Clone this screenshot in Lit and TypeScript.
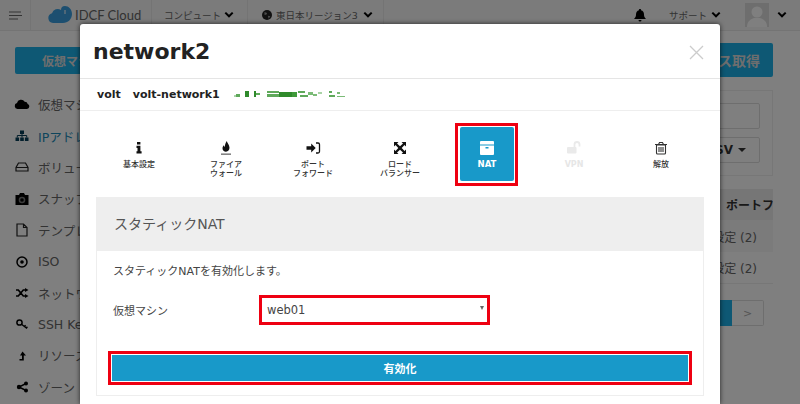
import { LitElement, html, css, svg } from "lit";
import { customElement } from "lit/decorators.js";

const chev = html`<svg class="chev" width="10" height="8" viewBox="0 0 10 8"><path d="M1.3 1.600 5 5.300l3.700-3.700" fill="none" stroke="#000" stroke-width="2"/></svg>`;

const sideIcons: Record<string, unknown> = {
  cloud: svg`<path d="M3.500 12a3 3 0 0 1-.5-5.900A4.200 4.200 0 0 1 10.700 4.700a3 3 0 0 1 3 2.300A2.600 2.600 0 0 1 13 12Z" fill="#000"/>`,
  sitemap: svg`<path d="M6 2.500h4v3.500H6zM1.500 9.500h3.600V13H1.500zM6.200 9.500h3.600V13H6.200zM10.900 9.500h3.600V13h-3.600z" fill="#063f58"/><path d="M3.300 9.500v-2h9.400v2M8 6v3.500" fill="none" stroke="#063f58"/>`,
  hdd: svg`<path d="M4.500 4h7l2.500 4.500V12H2V8.500ZM2 8.500h12" fill="none" stroke="#222" stroke-width="1.200"/>`,
  camera: svg`<path d="M1.500 4h3.500l1-2h4l1 2h3.500v10h-13z" fill="#000"/><circle cx="8" cy="9" r="3.300" fill="#777"/><circle cx="8" cy="9" r="1.800" fill="#000"/>`,
  file: svg`<path d="M3 2h6.500L13 5.500V14H3zM9.500 2v3.500H13" fill="none" stroke="#222" stroke-width="1.200"/>`,
  disc: svg`<circle cx="8" cy="8" r="5" fill="none" stroke="#000" stroke-width="1.500"/><circle cx="8" cy="8" r="1.800" fill="#000"/>`,
  random: svg`<path d="M2 5h2.300l5 6h1.700M2 11h2.300l5-6h1.700" fill="none" stroke="#000" stroke-width="1.700"/><path d="M11 3l3.500 2L11 7zM11 9l3.500 2-3.500 2z" fill="#000"/>`,
  key: svg`<circle cx="5.500" cy="6.500" r="2.600" fill="none" stroke="#000" stroke-width="1.500"/><path d="M7.500 8.300l5.500 4.200M10.300 10.500l1.300-1.300M12.300 12l1.100-1.200" fill="none" stroke="#000" stroke-width="1.400"/>`,
  up: svg`<path d="M8.500 3.500 12 7.500H9.800v5H5.500v-1.500h2.500V7.500H6Z" fill="#000"/>`,
  share: svg`<path d="M12 4.500 5 8l7 3.500" fill="none" stroke="#000" stroke-width="1.400"/><circle cx="12" cy="4.500" r="2" fill="#000"/><circle cx="5" cy="8" r="2.200" fill="#000"/><circle cx="12" cy="11.500" r="2" fill="#000"/>`,
};

const sideItems: [string, string, string][] = [
  ["cloud", "仮想マシン", ""],
  ["sitemap", "IPアドレス", "on"],
  ["hdd", "ボリューム", ""],
  ["camera", "スナップショット", ""],
  ["file", "テンプレート", ""],
  ["disc", "ISO", ""],
  ["random", "ネットワーク", ""],
  ["key", "SSH Key", ""],
  ["up", "リソース", ""],
  ["share", "ゾーン", ""],
];

const tabIcons: Record<string, unknown> = {
  info: svg`<path d="M6 2h3.400v2.600H6zM5.500 5.800h3.900v5.400h1.200V13.500H5.500v-2.300h1V8H5.500z" fill="#111"/>`,
  fire: svg`<path d="M8.800 0c.3 2.300 2.700 3.700 2.700 6.800 0 2.300-1.500 3.900-3.500 3.900S4.500 9.300 4.500 7.300c0-1.400.8-2.500 1.400-3.100 0 .9.300 1.500.8 1.800C6.900 4 7.400 2 8.800 0Z" fill="#111" transform="translate(0 1)"/><rect x="3" y="13.500" width="10" height="1.300" fill="#666"/>`,
  signin: svg`<path d="M1.500 6.200h4.700V3.500l4.500 4.500-4.500 4.500V9.800H1.500z" fill="#111"/><path d="M11 3h2a1.500 1.500 0 0 1 1.500 1.500v7A1.500 1.500 0 0 1 13 13h-2" fill="none" stroke="#111" stroke-width="1.300"/>`,
  expand: svg`<path d="M2 2h4.500L5 3.500 8 6.300l3-2.800L9.500 2H14v4.500L12.500 5 9.700 8l2.800 3 1.500-1.500V14H9.500l1.500-1.500-3-2.800-3 2.800L6.500 14H2V9.500L3.500 11l2.800-3-2.800-3L2 6.500z" fill="#111"/>`,
  archive: svg`<rect x="1" y="1" width="14" height="14" rx="1" fill="#fff"/><rect x="1" y="4.500" width="14" height="1" fill="#1899c9"/><rect x="6.500" y="7" width="3" height="1.500" fill="#1899c9"/>`,
  unlock: svg`<rect x="1" y="7" width="9.500" height="6.500" rx="1" fill="#eaeaea"/><path d="M8.500 7V4.500a2.500 2.500 0 0 1 5 0V6.500" fill="none" stroke="#eaeaea" stroke-width="1.800"/>`,
  trash: svg`<path d="M3.500 5h9v8a1 1 0 0 1-1 1h-7a1 1 0 0 1-1-1zM2 4.500h12M5.500 4.500 6.500 2.500h3l1 2M6 7v5M8 7v5M10 7v5" fill="none" stroke="#333" stroke-width="1.100"/>`,
};

const tabs: { icon: string; label: unknown; cls: string }[] = [
  { icon: "info", label: "基本設定", cls: "" },
  { icon: "fire", label: html`ファイア<br />ウォール`, cls: "" },
  { icon: "signin", label: html`ポート<br />フォワード`, cls: "" },
  { icon: "expand", label: html`ロード<br />バランサー`, cls: "" },
  { icon: "archive", label: "NAT", cls: "active" },
  { icon: "unlock", label: "VPN", cls: "disabled" },
  { icon: "trash", label: "解放", cls: "" },
];

const redacted: [number, number, number, number, string][] = [
  [0, 5, 2, 2, "#a9d3a6"], [2, 4, 4, 3, "#5fa95b"], [11, 1, 4, 6, "#2f8a2b"], [20, 1, 2, 6, "#2f8a2b"], [22, 3, 4, 2, "#5fa95b"],
  [33, 1, 12, 2, "#5fa95b"], [33, 4, 12, 3, "#5fa95b"], [45, 2, 13, 5, "#2f8a2b"], [58, 2, 5, 5, "#3f9a3a"],
  [64, 1, 7, 2, "#5fa95b"], [66, 5, 8, 2, "#5fa95b"], [74, 2, 5, 3, "#7bbb77"], [79, 4, 4, 2, "#7bbb77"], [84, 2, 4, 2, "#a9d3a6"],
  [95, 1, 3, 2, "#5fa95b"], [95, 5, 6, 2, "#5fa95b"], [103, 2, 3, 2, "#7bbb77"], [103, 6, 8, 1, "#7bbb77"],
];

@customElement("app-root")
export class AppRoot extends LitElement {
  static styles = css`
    :host {
      display: block;
      width: 800px;
      height: 404px;
      overflow: hidden;
      position: relative;
      font-family: "DejaVu Sans", "Noto Sans CJK JP", sans-serif;
      color: #666;
      background: #fff;
    }
    .topbar {
      height: 31px;
      box-sizing: border-box;
      background: #f6f6f6;
      border-bottom: 1px solid #e8e8e8;
      display: flex;
      align-items: center;
    }
    .cell {
      height: 100%;
      display: flex;
      align-items: center;
      border-right: 1px solid #e8e8e8;
      box-sizing: border-box;
      font-size: 9.500px;
      color: #666;
      white-space: nowrap;
    }
    .burger { width: 31px; justify-content: center; }
    .brand { width: 121px; padding-left: 17px; gap: 3px; font-family: Lato, sans-serif; font-size: 13px; }
    .compute { width: 96px; padding-left: 12px; gap: 3px; }
    .region { width: 136px; padding-left: 14px; gap: 4px; }
    .region .chev { margin-left: 1px; }
    .spacer { flex: 1; }
    .bell { margin-right: 23px; display: flex; }
    .support { display: flex; align-items: center; gap: 4px; font-size: 9.500px; color: #666; margin-right: 24px; }
    .avatar { width: 24px; height: 24px; margin-right: 8px; display: flex; }
    .usr { margin-right: 13px; display: flex; }
    .chev { display: block; }
    .content { display: flex; justify-content: space-between; }
    .side { width: 200px; }
    .side-btn {
      margin: 16px 0 0 15px;
      width: 150px;
      height: 27px;
      background: #1cb0e8;
      border-radius: 2px;
      color: #ddd;
      font-size: 12px;
      font-weight: 700;
      display: flex;
      align-items: center;
      padding-left: 27px;
      box-sizing: border-box;
    }
    .nav { margin-top: 15px; }
    .nav-item {
      height: 31.400px;
      display: flex;
      align-items: center;
      padding-left: 14px;
      gap: 8px;
      font-size: 12.500px;
      white-space: nowrap;
    }
    .nav-item.on { color: #1a8ab8; }
    .right { width: 130px; margin: 12px 27px 0 0; }
    .get-btn {
      height: 34px;
      background: #1cb0e8;
      border-radius: 2px;
      color: #ddd;
      font-size: 14px;
      font-weight: 700;
      display: flex;
      align-items: center;
      justify-content: flex-end;
      padding-right: 13px;
    }
    .filter {
      margin-top: 13px;
      height: 86px;
      box-sizing: border-box;
      border: 1px solid #eee;
      padding: 12px 12px 0 0;
    }
    .input { height: 26px; box-sizing: border-box; border: 1px solid #ddd; border-radius: 2px; }
    .csv {
      margin-top: 8px;
      height: 26px;
      box-sizing: border-box;
      border: 1px solid #ddd;
      border-radius: 2px;
      display: flex;
      align-items: center;
      justify-content: flex-end;
      gap: 5px;
      padding-right: 13px;
      font-size: 12px;
      font-weight: 700;
      color: #333;
    }
    .caret { width: 0; height: 0; border: 4px solid transparent; border-top-color: #333; border-bottom: 0; }
    .th {
      margin-top: 13px;
      height: 31px;
      background: #ededed;
      display: flex;
      align-items: center;
      padding-left: 83px;
      overflow: hidden;
      white-space: nowrap;
      font-size: 12px;
      font-weight: 700;
      color: #333;
    }
    .td {
      height: 32px;
      display: flex;
      align-items: center;
      justify-content: flex-end;
      padding-right: 16px;
      font-size: 12px;
      border-bottom: 1px solid #eee;
      box-sizing: border-box;
    }
    .td.alt { background: #f6f6f6; border: 0; }
    .pager { display: flex; justify-content: flex-end; margin: 16px 9px 0 0; height: 26px; }
    .pg-on { width: 12px; background: #1cb0e8; }
    .pg-next {
      width: 32px;
      box-sizing: border-box;
      border: 1px solid #ddd;
      border-left: 0;
      border-radius: 0 2px 2px 0;
      display: flex;
      align-items: center;
      justify-content: center;
      font-size: 11px;
      color: #aaa;
    }
    .dim { position: absolute; inset: 0; background: rgba(0, 0, 0, 0.5); }
    .modal {
      position: absolute;
      left: 80px;
      top: 24px;
      width: 640px;
      height: 380px;
      background: #fff;
      border-radius: 3px 3px 0 0;
      box-shadow: 0 0 5px rgba(0, 0, 0, 0.7);
      color: #333;
    }
    .m-head {
      height: 55px;
      box-sizing: border-box;
      border-bottom: 1px solid #e5e5e5;
      display: flex;
      align-items: center;
      justify-content: space-between;
      padding: 0 16px 0 13px;
    }
    .m-title { font-size: 22px; font-weight: 700; color: #222; padding-top: 1px; }
    .m-close { display: flex; margin-top: 3px; }
    .meta {
      height: 32px;
      box-sizing: border-box;
      border-bottom: 1px solid #eee;
      display: flex;
      align-items: center;
      padding: 0 0 1px 17px;
      font-size: 11px;
      font-weight: 700;
      color: #222;
      gap: 12px;
    }
    .meta svg { margin-left: 2px; }
    .tabs { display: grid; grid-template-columns: repeat(7, 87px); padding: 16px 16px 0; height: 70px; }
    .tab {
      position: relative;
      width: 54px;
      height: 54px;
      margin-left: 16px;
      display: flex;
      flex-direction: column;
      align-items: center;
      padding-top: 13px;
      box-sizing: border-box;
      font-size: 8px;
      line-height: 9px;
      color: #333;
      font-weight: 500;
      text-align: center;
      white-space: nowrap;
      border-radius: 2px;
    }
    .tab svg { margin-bottom: 4px; flex: none; }
    .tab.active { background: #1899c9; color: #fff; font-size: 8.500px; font-weight: 700; }
    .tab.active::after {
      content: "";
      position: absolute;
      left: -5px;
      top: -4px;
      right: -4px;
      bottom: -5px;
      border: 3px solid #ee0011;
    }
    .tab.disabled { color: #e6e6e6; font-weight: 700; }
    .panel {
      margin: 0 16px;
      height: 199px;
      box-sizing: border-box;
      border: 1px solid #eee;
      border-top: 0;
    }
    .p-head {
      height: 54px;
      background: #eee;
      display: flex;
      align-items: center;
      padding: 0 0 3px 17px;
      box-sizing: border-box;
      font-size: 14px;
      color: #555;
    }
    .p-body { padding: 0 15px 0 11px; }
    .p-desc { padding: 13px 0 0 5px; font-size: 11px; line-height: 16px; color: #444; }
    .row { display: flex; align-items: center; margin-top: 18px; }
    .label { width: 146px; padding-left: 5px; box-sizing: border-box; font-size: 11px; color: #444; }
    .select {
      width: 225px;
      height: 24px;
      box-sizing: border-box;
      outline: 3px solid #ee0011;
      display: flex;
      align-items: center;
      justify-content: space-between;
      padding: 0 3px 0 5px;
      font-size: 11.500px;
      color: #444;
      margin-left: 8px;
    }
    .s-caret { width: 0; height: 0; border: 2.500px solid transparent; border-top: 4px solid #666; border-bottom: 0; margin-bottom: 5px; }
    .submit {
      margin: 33px 0 0 4px;
      height: 26px;
      background: #1899c9;
      color: #fff;
      font-size: 11px;
      font-weight: 700;
      display: flex;
      align-items: center;
      justify-content: center;
      outline: 3px solid #ee0011;
      outline-offset: 1px;
    }
  `;

  render() {
    return html`
      <div class="topbar">
        <div class="cell burger">
          <svg width="13" height="9" viewBox="0 0 13 9"><path d="M0 1h12M0 4.500h13M0 8h9" stroke="#666" stroke-width="1.200"/></svg>
        </div>
        <div class="cell brand">
          <svg width="24" height="18" viewBox="0 0 24 18"><path d="M5 17a5 5 0 0 1-1-9.800A6 6 0 0 1 13 4a4 4 0 0 1 4-4c3.500 0 7 3 7 8s-4 9-9 9Z" fill="#3a9fe0"/><path d="M17 4v4" stroke="#fff" stroke-width="1"/></svg>
          IDCF Cloud
        </div>
        <div class="cell compute">コンピュート${chev}</div>
        <div class="cell region">
          <svg width="10" height="10" viewBox="0 0 12 12"><circle cx="6" cy="6" r="6" fill="#222"/><path d="M3 2.500l3 1-.5 2-2.500.5zM7 7l3 .5-2 3z" fill="#999"/></svg>
          <span>東日本リージョン3</span>${chev}
        </div>
        <div class="spacer"></div>
        <div class="bell">
          <svg width="12" height="13" viewBox="0 0 12 13"><path d="M6 0a1 1 0 0 1 1 1.300c2 .5 3 2 3 4.200 0 2 .7 3.300 2 4.500H0c1.300-1.200 2-2.500 2-4.500C2 3.300 3 1.800 5 1.300A1 1 0 0 1 6 0ZM4.500 11h3a1.500 1.500 0 0 1-3 0Z" fill="#000"/></svg>
        </div>
        <div class="support">サポート${chev}</div>
        <div class="avatar">
          <svg width="24" height="24" viewBox="0 0 24 24"><rect width="24" height="24" fill="#ddd"/><circle cx="12" cy="9" r="5.500" fill="#fff"/><path d="M2 24c0-6 4-8 7-9h6c3 1 7 3 7 9z" fill="#fff"/></svg>
        </div>
        <div class="usr">${chev}</div>
      </div>
      <div class="content">
        <div class="side">
          <div class="side-btn">仮想マシン作成</div>
          <div class="nav">
            ${sideItems.map(
              ([ic, t, c]) => html`<div class="nav-item ${c}">
                <svg width="16" height="16" viewBox="0 0 16 16">${sideIcons[ic]}</svg>${t}
              </div>`
            )}
          </div>
        </div>
        <div class="right">
          <div class="get-btn">IPアドレス取得</div>
          <div class="filter">
            <div class="input"></div>
            <div class="csv">CSV <span class="caret"></span></div>
          </div>
          <div class="th">ポートフォ</div>
          <div class="td alt">設定 (2)</div>
          <div class="td">設定 (2)</div>
          <div class="pager"><div class="pg-on"></div><div class="pg-next">&gt;</div></div>
        </div>
      </div>
      <div class="dim"></div>
      <div class="modal">
        <div class="m-head">
          <div class="m-title">network2</div>
          <div class="m-close">
            <svg width="15" height="15" viewBox="0 0 15 15"><path d="M1 1l13 13M14 1 1 14" stroke="#ccc" stroke-width="1.300"/></svg>
          </div>
        </div>
        <div class="meta">
          <span>volt</span><span>volt-network1</span>
          <svg width="114" height="9" viewBox="0 0 114 9">
            ${redacted.map(([x, y, w, h, f]) => svg`<rect x=${x} y=${y} width=${w} height=${h} fill=${f}/>`)}
          </svg>
        </div>
        <div class="tabs">
          ${tabs.map(
            (t) => html`<div class="tab ${t.cls}">
              <svg width="16" height="16" viewBox="0 0 16 16">${tabIcons[t.icon]}</svg>
              <div>${t.label}</div>
            </div>`
          )}
        </div>
        <div class="panel">
          <div class="p-head">スタティックNAT</div>
          <div class="p-body">
            <div class="p-desc">スタティックNATを有効化します。</div>
            <div class="row">
              <div class="label">仮想マシン</div>
              <div class="select"><span>web01</span><i class="s-caret"></i></div>
            </div>
            <div class="submit">有効化</div>
          </div>
        </div>
      </div>
    `;
  }
}
